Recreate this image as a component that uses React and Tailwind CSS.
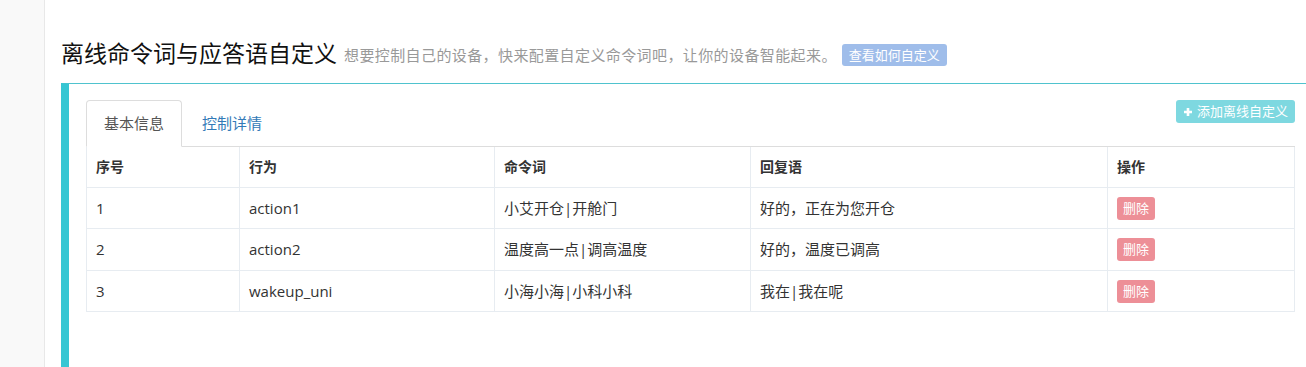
import React from "react";

const rows = [
  { id: "1", action: "action1", cmd: "小艾开仓|开舱门", reply: "好的，正在为您开仓" },
  { id: "2", action: "action2", cmd: "温度高一点|调高温度", reply: "好的，温度已调高" },
  { id: "3", action: "wakeup_uni", cmd: "小海小海|小科小科", reply: "我在|我在呢" },
];

export default function App() {
  return (
    <div
      className="flex h-[367px] w-[1306px] overflow-hidden bg-white text-[#333]"
      style={{ fontFamily: '"Open Sans", "Noto Sans CJK SC", sans-serif' }}
    >
      <div className="w-[45px] shrink-0 border-r border-[#e8e8e8] bg-[#f9f9f9]" />
      <div className="flex min-w-0 flex-1 flex-col pl-[16px]">
        <div className="flex items-center pt-[36px] h-[83px] pb-[14px]">
          <h1 className="text-[23px] leading-[30px] font-normal text-[#111]">离线命令词与应答语自定义</h1>
          <span className="ml-[7px] mt-[4px] text-[15px] tracking-[0.4px] text-[#999] leading-[20px]">
            想要控制自己的设备，快来配置自定义命令词吧，让你的设备智能起来。
          </span>
          <span className="ml-[5px] mt-[4px] rounded-[3px] bg-[#9fbdea] px-[7px] text-[13px] leading-[22px] text-white">
            查看如何自定义
          </span>
        </div>
        <div className="flex-1 border-l-[8px] border-t border-l-[#36c6d3] border-t-[#4fc3ce] pl-[17px] pr-[11px] pt-[16px]">
          <div className="flex items-start justify-between border-b border-[#ddd]">
            <div className="flex -mb-px">
              <div className="h-[47px] rounded-t-[4px] border border-[#ddd] border-b-white bg-white px-[17px] pt-[12px] text-[15px] leading-[20px] text-[#555]">
                基本信息
              </div>
              <div className="ml-[3px] px-[17px] pt-[13px] text-[15px] leading-[20px] text-[#337ab7]">
                控制详情
              </div>
            </div>
            <span className="flex h-[23px] items-center rounded-[3px] bg-[#7ed8e0] px-[7px] text-[13px] text-white">
              <svg width="10" height="10" viewBox="0 0 10 10" className="mr-[4px]">
                <path d="M5 1v8M1 5h8" stroke="white" strokeWidth="2.6" strokeLinecap="butt" />
              </svg>
              添加离线自定义
            </span>
          </div>
          <table className="w-full border-collapse border border-t-0 border-[#e7ecf1] text-[15px] text-[#333]">
            <colgroup>
              <col style={{ width: 153 }} />
              <col style={{ width: 255 }} />
              <col style={{ width: 256 }} />
              <col style={{ width: 357 }} />
              <col />
            </colgroup>
            <thead>
              <tr className="h-[40px]">
                {["序号", "行为", "命令词", "回复语", "操作"].map((h) => (
                  <th key={h} className="border border-t-0 border-[#e7ecf1] px-[9px] text-left text-[14px] font-bold">
                    {h}
                  </th>
                ))}
              </tr>
            </thead>
            <tbody>
              {rows.map((r) => (
                <tr key={r.id} className="h-[41.5px]">
                  <td className="border border-[#e7ecf1] px-[9px]">{r.id}</td>
                  <td className="border border-[#e7ecf1] px-[9px]">{r.action}</td>
                  <td className="border border-[#e7ecf1] px-[9px]">{r.cmd}</td>
                  <td className="border border-[#e7ecf1] px-[9px]">{r.reply}</td>
                  <td className="border border-[#e7ecf1] px-[9px]">
                    <span className="inline-block rounded-[3px] bg-[#ed8f97] px-[6px] text-[13px] leading-[23px] text-white">
                      删除
                    </span>
                  </td>
                </tr>
              ))}
            </tbody>
          </table>
        </div>
      </div>
    </div>
  );
}
